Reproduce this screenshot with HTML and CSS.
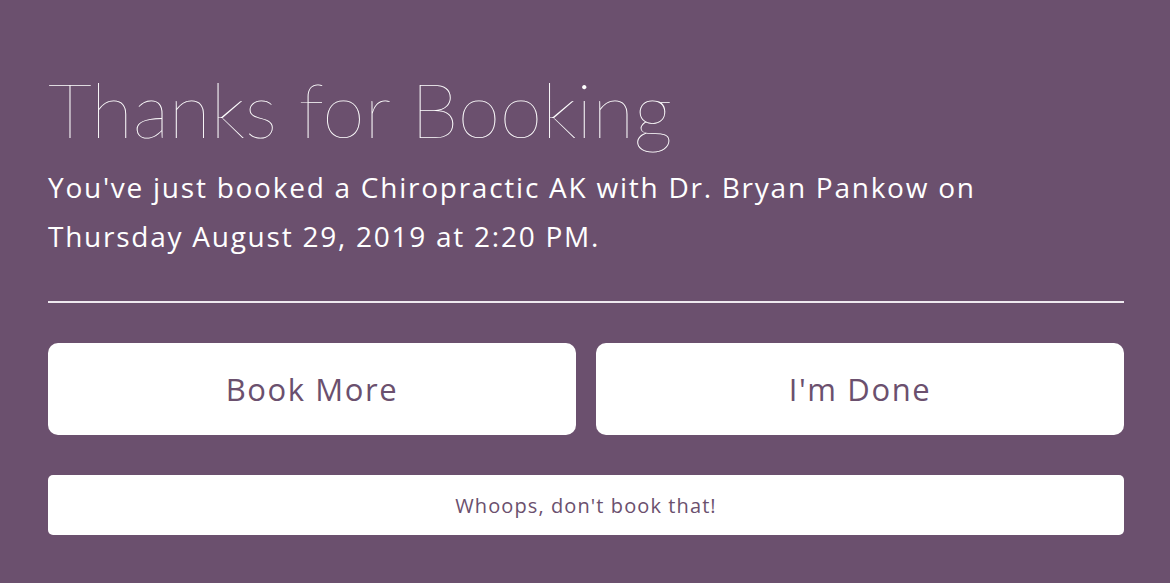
FILE: index.html
```html
<!DOCTYPE html>
<html>
<head>
<meta charset="utf-8">
<link rel="stylesheet" href="styles.css">
</head>
<body>
<main class="page">
  <h1 class="title">Thanks for Booking</h1>
  <p class="summary">You've just booked a Chiropractic AK with Dr. Bryan Pankow on Thursday August 29, 2019 at 2:20 PM.</p>
  <hr class="divider">
  <div class="actions">
    <button class="btn btn-big">Book More</button>
    <button class="btn btn-big">I'm Done</button>
  </div>
  <button class="btn btn-small">Whoops, don't book that!</button>
</main>
</body>
</html>
```
FILE: styles.css
```css
html, body {
  margin: 0;
  padding: 0;
  background: #6b506e;
}
body {
  font-family: "Open Sans", "Lato", sans-serif;
  color: #ffffff;
}
.page {
  padding: 63px 46px 0 48px;
  display: flex;
  flex-direction: column;
}
.title {
  margin: 0;
  font-family: "Lato", sans-serif;
  font-weight: 100;
  font-size: 77px;
  line-height: 90px;
  letter-spacing: -0.2px;
}
.summary {
  margin: 10px 0 0 0;
  font-size: 28px;
  line-height: 49px;
  letter-spacing: 1.75px;
  max-width: 1000px;
}
.divider {
  margin: 40px 0 0 0;
  border: 0;
  height: 2px;
  background: #eee9ef;
}
.actions {
  margin-top: 40px;
  display: grid;
  grid-template-columns: 1fr 1fr;
  gap: 20px;
}
.btn {
  border: 0;
  background: #ffffff;
  color: #6b506e;
  font-family: "Open Sans", sans-serif;
  cursor: pointer;
}
.btn-big {
  height: 92px;
  border-radius: 10px;
  font-size: 31px;
  letter-spacing: 1.6px;
}
.btn-small {
  margin-top: 40px;
  height: 60px;
  border-radius: 5px;
  font-size: 20px;
  letter-spacing: 1.1px;
}
```
